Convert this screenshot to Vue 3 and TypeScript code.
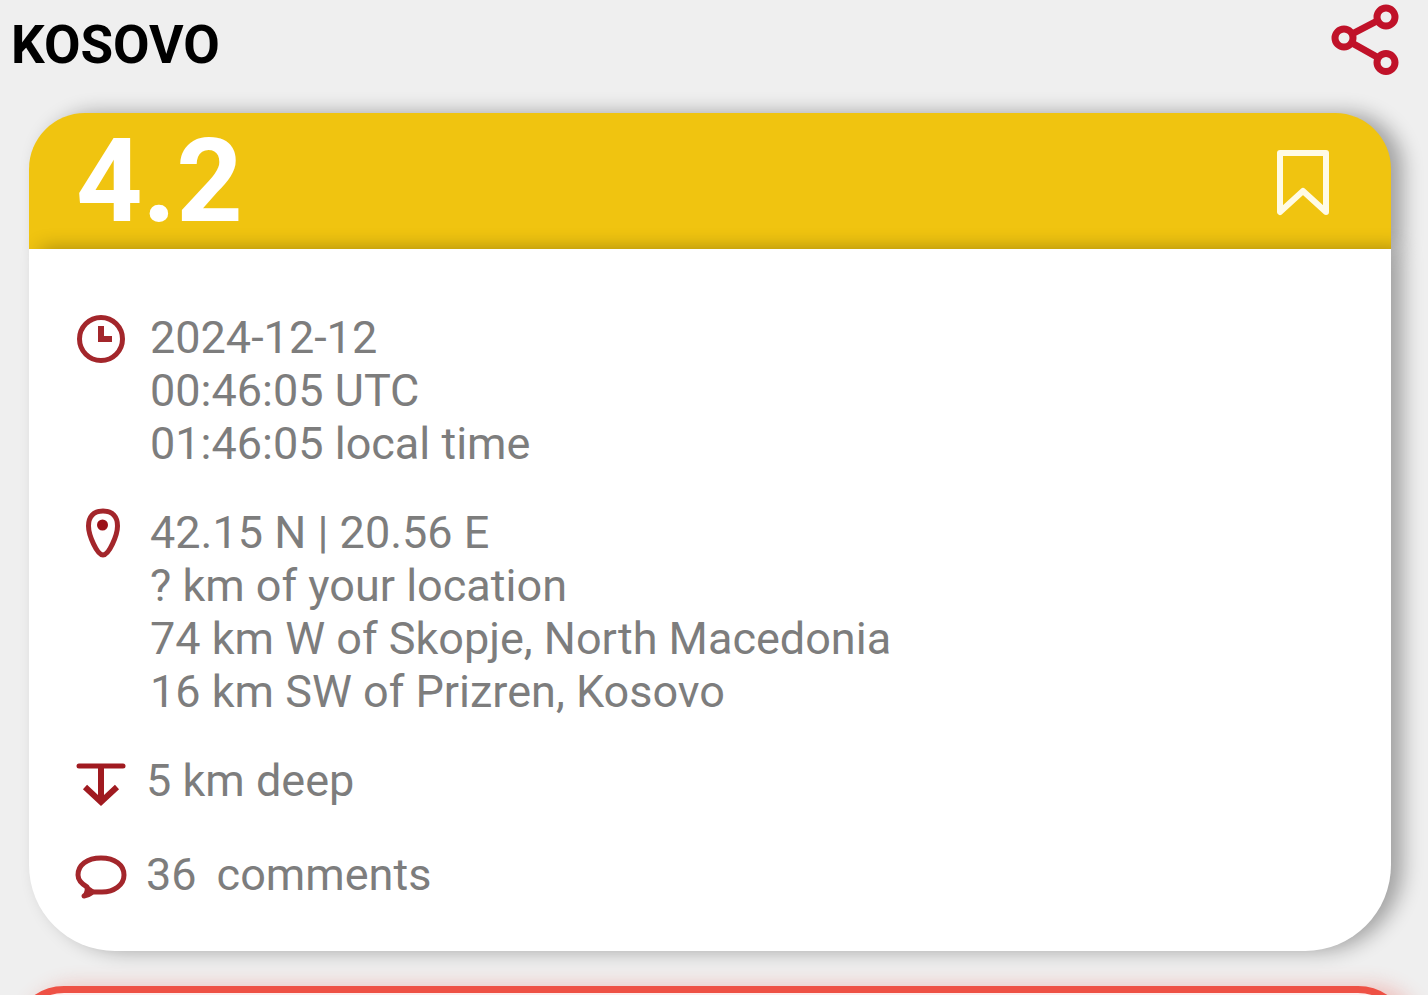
<script setup lang="ts">
interface Quake {
  region: string
  magnitude: string
  time: string[]
  place: string[]
  depth: string
  comments: number
}

const quake: Quake = {
  region: 'KOSOVO',
  magnitude: '4.2',
  time: ['2024-12-12', '00:46:05 UTC', '01:46:05 local time'],
  place: [
    '42.15 N | 20.56 E',
    '? km of your location',
    '74 km W of Skopje, North Macedonia',
    '16 km SW of Prizren, Kosovo',
  ],
  depth: '5 km deep',
  comments: 36,
}
</script>

<template>
  <main class="page">
    <header class="topbar">
      <h1 class="region">{{ quake.region }}</h1>
      <button class="icon-button" type="button" aria-label="Share">
        <svg class="share" width="70" height="72" viewBox="0 0 70 72" fill="none" stroke="#c01229" stroke-width="7">
          <path d="M22 30 47 17M22 39 47 53" />
          <circle cx="14" cy="34" r="9" />
          <circle cx="56" cy="13" r="9" />
          <circle cx="56" cy="58.500" r="9" />
        </svg>
      </button>
    </header>

    <article class="card">
      <div class="card-head">
        <strong class="magnitude">{{ quake.magnitude }}</strong>
        <button class="icon-button" type="button" aria-label="Bookmark">
          <svg width="60" height="72" viewBox="0 0 60 72" fill="none" stroke="#fffbe6" stroke-width="6" stroke-linejoin="round">
            <path d="M7 8H53V67L30 46 7 67Z" />
          </svg>
        </button>
      </div>

      <div class="card-body">
        <section class="row">
          <svg class="icon" width="50" height="54" viewBox="0 0 50 54" fill="none" stroke="#a3262b" stroke-width="5">
            <circle cx="25" cy="28" r="21.500" />
            <path d="M25 15V28H36" stroke-width="6" />
          </svg>
          <div class="lines">
            <span v-for="line in quake.time" :key="line">{{ line }}</span>
          </div>
        </section>

        <section class="row">
          <svg class="icon" width="50" height="54" viewBox="0 0 50 54" fill="none" stroke="#a3262b" stroke-width="5">
            <path d="M27 5C17 5 12.500 11 12.500 20C12.500 29 21 49 27 49C33 49 41.500 29 41.500 20C41.500 11 37 5 27 5Z" />
            <circle cx="26.500" cy="19" r="5.500" fill="#9b1118" stroke="none" />
          </svg>
          <div class="lines">
            <span v-for="line in quake.place" :key="line">{{ line }}</span>
          </div>
        </section>

        <section class="row narrow">
          <svg class="icon" width="50" height="54" viewBox="0 0 50 54" fill="none" stroke="#a01a20" stroke-width="6">
            <path d="M3 12H47" stroke-width="5" stroke-linecap="round" />
            <path d="M25 12V48" />
            <path d="M9 33 25 48 41 33" />
          </svg>
          <div class="lines">
            <span>{{ quake.depth }}</span>
          </div>
        </section>

        <a class="row narrow comments" href="#comments">
          <svg class="icon" width="50" height="54" viewBox="0 0 50 54" fill="none" stroke="#a3262b" stroke-width="5" stroke-linejoin="round">
            <path d="M8 48Q12 45 11 39C6 36 2 32 2 27C2 17 11 10 25 10C39 10 48 17 48 27C48 37 38 44 26 44C22 44 19 44 17 44Q13 47 8 48Z" />
            <path d="M11 38 18 43 9 47Z" fill="#a3262b" stroke-width="2" />
          </svg>
          <span>{{ quake.comments }}</span>
          <span>comments</span>
        </a>
      </div>
    </article>

    <section class="next-card"></section>
  </main>
</template>

<style>
body {
  margin: 0;
  background: #efefef;
}
</style>

<style scoped>
.page {
  box-sizing: border-box;
  height: 100vh;
  overflow: hidden;
  display: flex;
  flex-direction: column;
  background: #efefef;
  font-family: Roboto, "Liberation Sans", sans-serif;
  color: #7d7d7d;
}

.topbar {
  flex: none;
  display: flex;
  justify-content: space-between;
  align-items: flex-start;
  height: 113px;
  padding: 4px 28px 0 11px;
  box-sizing: border-box;
}

.region {
  margin: 0;
  padding-top: 10px;
  font-size: 53px;
  line-height: 62px;
  font-weight: 700;
  color: #000;
}

.icon-button {
  display: block;
  padding: 0;
  border: 0;
  background: none;
  cursor: pointer;
}

.icon-button svg,
.icon {
  display: block;
}

.icon {
  flex: none;
  overflow: visible;
}

.card {
  flex: none;
  margin: 0 37px 0 29px;
}

.card-head {
  display: flex;
  justify-content: space-between;
  align-items: center;
  height: 136px;
  box-sizing: border-box;
  padding: 0 58px 0 47px;
  border-radius: 56px 56px 0 0;
  background: #f0c410;
  box-shadow: 12px 0 20px rgba(0, 0, 0, 0.32);
}

.magnitude {
  font-size: 116px;
  line-height: 136px;
  font-weight: 700;
  color: #fff;
}

.card-body {
  display: flex;
  flex-direction: column;
  gap: 36px;
  position: relative;
  padding: 62px 47px 49px;
  border-radius: 0 0 86px 86px;
  background: #fff;
  box-shadow: 12px 0 20px rgba(0, 0, 0, 0.32);
}

.row {
  display: flex;
  gap: 24px;
  font-size: 45px;
  line-height: 53px;
  color: inherit;
  text-decoration: none;
}

.narrow {
  gap: 20px;
}

.lines {
  display: flex;
  flex-direction: column;
}

.comments {
  padding-top: 4px;
}

.next-card {
  flex: none;
  height: 320px;
  box-sizing: border-box;
  margin: 35px 18px 0 12px;
  border: 7px solid #ee5145;
  border-radius: 52px;
  background: #fdeeee;
  box-shadow: 12px 0 20px rgba(238, 81, 69, 0.32);
}
</style>
